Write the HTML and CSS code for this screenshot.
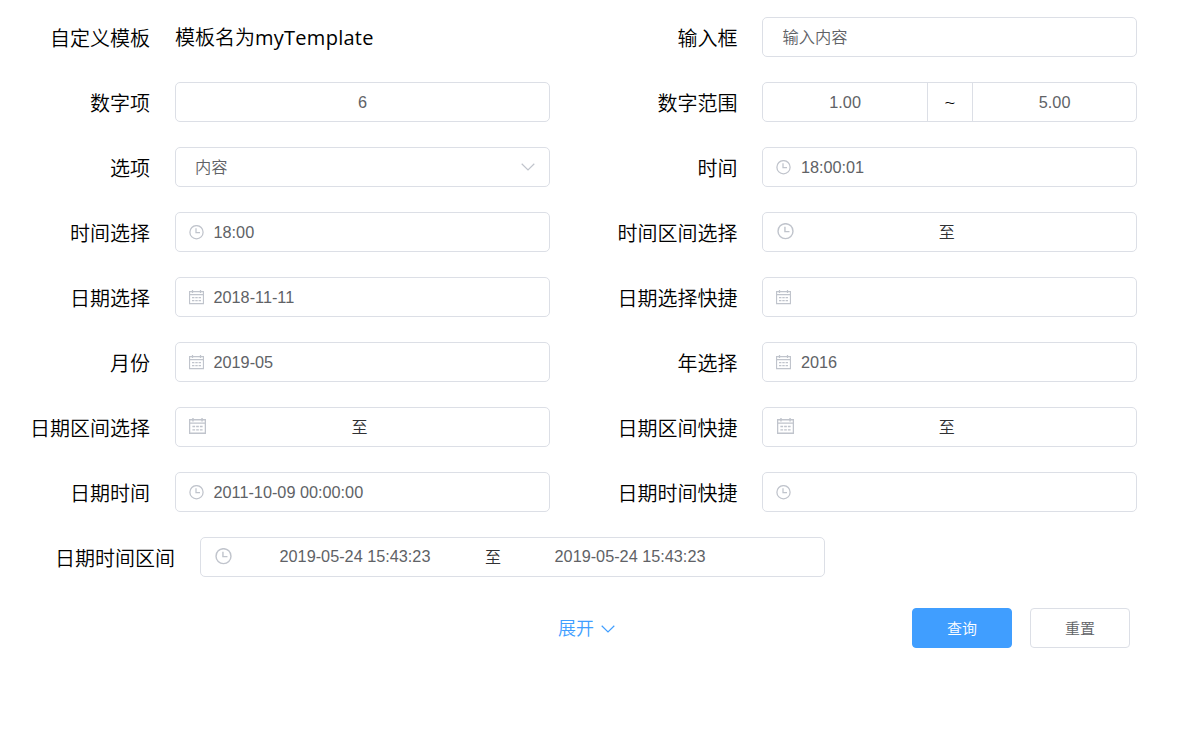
FILE: index.html
```html
<!DOCTYPE html>
<html lang="zh-CN">
<head>
<meta charset="utf-8">
<title>查询表单</title>
<link rel="stylesheet" href="styles.css">
</head>
<body>
<svg class="sprite" aria-hidden="true">
  <symbol id="clock" viewBox="0 0 15 15">
    <circle cx="7.5" cy="7.2" r="6.6"/>
    <path d="M7 3.2V7.6H11"/>
  </symbol>
  <symbol id="calendar" viewBox="0 0 15 15">
    <path d="M.5 1.5H14.5V13.5H.5ZM.5 4.5H14.5M3.5 0V3M11.5 0V3"/>
    <path d="M3 7.5H12M3 10.5H12" stroke-dasharray="2.4 .9"/>
  </symbol>
  <symbol id="arrow" viewBox="0 0 14 8">
    <path d="M.7 .8L7 7L13.3 .8"/>
  </symbol>
</svg>
<main class="form">
  <div class="item"><label class="label">自定义模板</label><div class="template">模板名为<span class="template-name">myTemplate</span></div></div>
  <div class="item"><label class="label">输入框</label><div class="field field-text">输入内容</div></div>

  <div class="item"><label class="label">数字项</label><div class="field field-center">6</div></div>
  <div class="item"><label class="label">数字范围</label><div class="field field-range"><span class="bound">1.00</span><span class="tilde">~</span><span class="bound">5.00</span></div></div>

  <div class="item"><label class="label">选项</label><div class="field field-text">内容<svg class="arrow arrow-end"><use href="#arrow"/></svg></div></div>
  <div class="item"><label class="label">时间</label><div class="field"><svg class="icon"><use href="#clock"/></svg>18:00:01</div></div>

  <div class="item"><label class="label">时间选择</label><div class="field"><svg class="icon"><use href="#clock"/></svg>18:00</div></div>
  <div class="item"><label class="label">时间区间选择</label><div class="field"><svg class="icon icon-large"><use href="#clock"/></svg><span class="start"></span><span class="to">至</span></div></div>

  <div class="item"><label class="label">日期选择</label><div class="field"><svg class="icon"><use href="#calendar"/></svg>2018-11-11</div></div>
  <div class="item"><label class="label">日期选择快捷</label><div class="field"><svg class="icon"><use href="#calendar"/></svg></div></div>

  <div class="item"><label class="label">月份</label><div class="field"><svg class="icon"><use href="#calendar"/></svg>2019-05</div></div>
  <div class="item"><label class="label">年选择</label><div class="field"><svg class="icon"><use href="#calendar"/></svg>2016</div></div>

  <div class="item"><label class="label">日期区间选择</label><div class="field"><svg class="icon icon-large"><use href="#calendar"/></svg><span class="start"></span><span class="to">至</span></div></div>
  <div class="item"><label class="label">日期区间快捷</label><div class="field"><svg class="icon icon-large"><use href="#calendar"/></svg><span class="start"></span><span class="to">至</span></div></div>

  <div class="item"><label class="label">日期时间</label><div class="field"><svg class="icon"><use href="#clock"/></svg>2011-10-09 00:00:00</div></div>
  <div class="item"><label class="label">日期时间快捷</label><div class="field"><svg class="icon"><use href="#clock"/></svg></div></div>

  <div class="item item-wide"><label class="label">日期时间区间</label><div class="field field-wide"><svg class="icon icon-large"><use href="#clock"/></svg><span class="moment">2019-05-24 15:43:23</span><span class="to">至</span><span class="moment">2019-05-24 15:43:23</span></div></div>
</main>
<footer class="actions">
  <a class="expand">展开<svg class="arrow"><use href="#arrow"/></svg></a>
  <div class="buttons"><button class="button button-primary">查询</button><button class="button">重置</button></div>
</footer>
</body>
</html>
```
FILE: styles.css
```css
* { box-sizing: border-box; }
body {
  margin: 0;
  padding-top: 17px;
  background: #fff;
  color: #000;
  font-family: "Liberation Sans", "Noto Sans CJK SC", sans-serif;
  font-size: 20px;
}
.sprite { position: absolute; width: 0; height: 0; }
.form {
  display: grid;
  grid-template-columns: 587.4px 587.4px;
  row-gap: 25px;
}
.item { display: flex; height: 40px; }
.item-wide { grid-column: 1 / -1; }
.label {
  width: 175px;
  padding-right: 25px;
  text-align: right;
  line-height: 41px;
  font-family: "Noto Sans CJK SC", sans-serif;
  font-weight: 350;
  white-space: nowrap;
}
.item-wide .label { width: 200px; }
.template {
  line-height: 40px;
  font-family: "Noto Sans CJK SC", sans-serif;
  font-weight: 350;
  white-space: nowrap;
}
.template-name {
  font-family: "Open Sans", sans-serif;
  font-weight: 400;
  letter-spacing: .27px;
}
.field {
  display: flex;
  align-items: center;
  width: 375px;
  height: 40px;
  padding: 0 13px;
  border: 1px solid #dcdfe6;
  border-radius: 5px;
  color: #606266;
  font-size: 16.25px;
  font-weight: 350;
  line-height: 38px;
  white-space: nowrap;
}
.field-text { padding: 0 14px 0 19px; }
.field-center { justify-content: center; }
.field-range { padding: 0; }
.field-wide { width: 625px; padding-left: 14px; }
.bound { flex: 1; text-align: center; }
.tilde {
  width: 46px;
  height: 38px;
  padding-top: 1px;
  border: solid #dcdfe6;
  border-width: 0 1px;
  color: #000;
  text-align: center;
  font-family: "Open Sans", sans-serif;
  font-size: 20px;
}
.icon {
  flex: none;
  width: 15px;
  height: 15px;
  margin-right: 9.5px;
  fill: none;
  stroke: #c0c4cc;
  stroke-width: 1.25;
}
.icon-large { width: 17px; height: 17px; margin: 0 9.5px 2px .4px; }
.field-wide .icon-large { margin: 0 0 2px; }
.start { width: 135.5px; }
.to {
  padding-top: 2px;
  color: #303133;
  font-size: 16px;
}
.moment { width: 246px; padding-bottom: 2px; text-align: center; }
.field-wide .to { margin: 0 6px 0 7px; }
.arrow {
  width: 14px;
  height: 8px;
  fill: none;
  stroke: #c0c4cc;
  stroke-width: 1.2;
}
.arrow-end { margin-left: auto; }
.actions {
  display: grid;
  grid-template-columns: 558px 354px auto;
  align-items: center;
  margin-top: 31px;
}
.expand {
  grid-column: 2;
  display: flex;
  align-items: center;
  gap: 7px;
  height: 40px;
  padding-top: 2px;
  color: #409eff;
  font-size: 18px;
  font-weight: 350;
  line-height: 38px;
}
.expand .arrow { stroke: #409eff; }
.buttons { display: flex; gap: 18px; }
.button {
  width: 100px;
  height: 40px;
  padding: 0 0 1px;
  border: 1px solid #dcdfe6;
  border-radius: 4px;
  background: #fff;
  color: #606266;
  font-family: "Noto Sans CJK SC", sans-serif;
  font-size: 15px;
  font-weight: 350;
}
.button-primary { border-color: #409eff; background: #409eff; color: #fff; }
```
